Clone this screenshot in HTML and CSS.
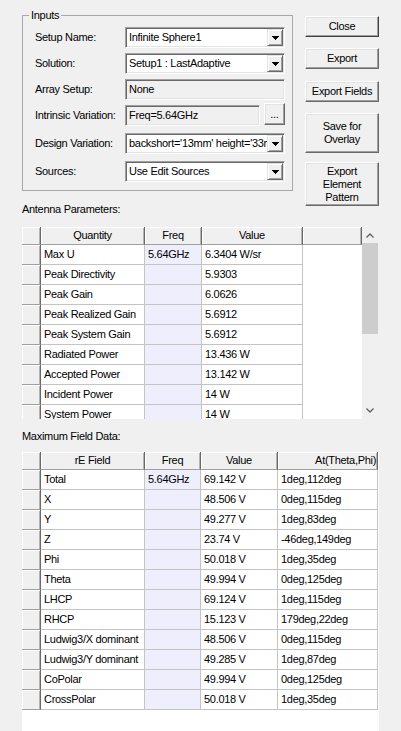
FILE: index.html
```html
<!DOCTYPE html>
<html>
<head>
<meta charset="utf-8">
<link rel="stylesheet" href="styles.css">
</head>
<body>
<div class="dlg">
  <div class="top">
    <fieldset class="group">
      <legend>Inputs</legend>
      <div class="row">
        <span class="lbl">Setup Name:</span>
        <div class="combo sunken"><span class="val">Infinite Sphere1</span><span class="drop"><svg width="7" height="4" viewBox="0 0 7 4"><polygon points="0,0 7,0 3.5,4" fill="#000"/></svg></span></div>
      </div>
      <div class="row">
        <span class="lbl">Solution:</span>
        <div class="combo sunken"><span class="val">Setup1 : LastAdaptive</span><span class="drop"><svg width="7" height="4" viewBox="0 0 7 4"><polygon points="0,0 7,0 3.5,4" fill="#000"/></svg></span></div>
      </div>
      <div class="row">
        <span class="lbl">Array Setup:</span>
        <div class="field ro sunken"><span class="val">None</span></div>
      </div>
      <div class="row">
        <span class="lbl">Intrinsic Variation:</span>
        <div class="field ro short sunken"><span class="val">Freq=5.64GHz</span></div>
        <button class="btn dots">...</button>
      </div>
      <div class="row gap7">
        <span class="lbl">Design Variation:</span>
        <div class="combo sunken"><span class="val">backshort='13mm' height='33mm'</span><span class="drop"><svg width="7" height="4" viewBox="0 0 7 4"><polygon points="0,0 7,0 3.5,4" fill="#000"/></svg></span></div>
      </div>
      <div class="row gap7">
        <span class="lbl">Sources:</span>
        <div class="combo sunken"><span class="val">Use Edit Sources</span><span class="drop"><svg width="7" height="4" viewBox="0 0 7 4"><polygon points="0,0 7,0 3.5,4" fill="#000"/></svg></span></div>
      </div>
    </fieldset>
    <div class="btns">
      <button class="btn b-close">Close</button>
      <button class="btn b-export">Export</button>
      <button class="btn b-fields">Export Fields</button>
      <button class="btn b-save">Save for<br>Overlay</button>
      <button class="btn b-pattern">Export<br>Element<br>Pattern</button>
    </div>
  </div>

  <div class="cap cap1">Antenna Parameters:</div>
  <div class="grid1">
    <div class="gview t1">
      <div class="tr hd"><div class="c"></div><div class="c">Quantity</div><div class="c">Freq</div><div class="c">Value</div><div class="c"></div></div>
      <div class="tr"><div class="c rh"></div><div class="c">Max U</div><div class="c fq">5.64GHz</div><div class="c">6.3404 W/sr</div><div class="c bl"></div></div>
      <div class="tr"><div class="c rh"></div><div class="c">Peak Directivity</div><div class="c fq"></div><div class="c">5.9303</div><div class="c bl"></div></div>
      <div class="tr"><div class="c rh"></div><div class="c">Peak Gain</div><div class="c fq"></div><div class="c">6.0626</div><div class="c bl"></div></div>
      <div class="tr"><div class="c rh"></div><div class="c">Peak Realized Gain</div><div class="c fq"></div><div class="c">5.6912</div><div class="c bl"></div></div>
      <div class="tr"><div class="c rh"></div><div class="c">Peak System Gain</div><div class="c fq"></div><div class="c">5.6912</div><div class="c bl"></div></div>
      <div class="tr"><div class="c rh"></div><div class="c">Radiated Power</div><div class="c fq"></div><div class="c">13.436 W</div><div class="c bl"></div></div>
      <div class="tr"><div class="c rh"></div><div class="c">Accepted Power</div><div class="c fq"></div><div class="c">13.142 W</div><div class="c bl"></div></div>
      <div class="tr"><div class="c rh"></div><div class="c">Incident Power</div><div class="c fq"></div><div class="c">14 W</div><div class="c bl"></div></div>
      <div class="tr"><div class="c rh"></div><div class="c">System Power</div><div class="c fq"></div><div class="c">14 W</div><div class="c bl"></div></div>
    </div>
    <div class="vs">
      <div class="arr up"><svg width="8" height="5" viewBox="0 0 8 5"><polyline points="0.5,4.5 4,1 7.5,4.5" fill="none" stroke="#606060" stroke-width="1.3"/></svg></div>
      <div class="thumb"></div>
      <div class="track"></div>
      <div class="arr dn"><svg width="8" height="5" viewBox="0 0 8 5"><polyline points="0.5,0.5 4,4 7.5,0.5" fill="none" stroke="#606060" stroke-width="1.3"/></svg></div>
    </div>
  </div>

  <div class="cap cap2">Maximum Field Data:</div>
  <div class="grid2 t2">
    <div class="tr hd"><div class="c"></div><div class="c">rE Field</div><div class="c">Freq</div><div class="c">Value</div><div class="c at">At(Theta,Phi)</div></div>
    <div class="tr"><div class="c rh"></div><div class="c">Total</div><div class="c fq">5.64GHz</div><div class="c">69.142 V</div><div class="c">1deg,112deg</div></div>
    <div class="tr"><div class="c rh"></div><div class="c">X</div><div class="c fq"></div><div class="c">48.506 V</div><div class="c">0deg,115deg</div></div>
    <div class="tr"><div class="c rh"></div><div class="c">Y</div><div class="c fq"></div><div class="c">49.277 V</div><div class="c">1deg,83deg</div></div>
    <div class="tr"><div class="c rh"></div><div class="c">Z</div><div class="c fq"></div><div class="c">23.74 V</div><div class="c">-46deg,149deg</div></div>
    <div class="tr"><div class="c rh"></div><div class="c">Phi</div><div class="c fq"></div><div class="c">50.018 V</div><div class="c">1deg,35deg</div></div>
    <div class="tr"><div class="c rh"></div><div class="c">Theta</div><div class="c fq"></div><div class="c">49.994 V</div><div class="c">0deg,125deg</div></div>
    <div class="tr"><div class="c rh"></div><div class="c">LHCP</div><div class="c fq"></div><div class="c">69.124 V</div><div class="c">1deg,115deg</div></div>
    <div class="tr"><div class="c rh"></div><div class="c">RHCP</div><div class="c fq"></div><div class="c">15.123 V</div><div class="c">179deg,22deg</div></div>
    <div class="tr"><div class="c rh"></div><div class="c">Ludwig3/X dominant</div><div class="c fq"></div><div class="c">48.506 V</div><div class="c">0deg,115deg</div></div>
    <div class="tr"><div class="c rh"></div><div class="c">Ludwig3/Y dominant</div><div class="c fq"></div><div class="c">49.285 V</div><div class="c">1deg,87deg</div></div>
    <div class="tr"><div class="c rh"></div><div class="c">CoPolar</div><div class="c fq"></div><div class="c">49.994 V</div><div class="c">0deg,125deg</div></div>
    <div class="tr"><div class="c rh"></div><div class="c">CrossPolar</div><div class="c fq"></div><div class="c">50.018 V</div><div class="c">1deg,35deg</div></div>
  </div>
</div>
</body>
</html>
```
FILE: styles.css
```css
html, body {
  margin: 0;
  padding: 0;
  background: #f0f0f0;
}
body {
  font-family: "Liberation Sans", Arial, sans-serif;
  font-size: 11px;
  line-height: 13px;
  letter-spacing: -0.3px;
  color: #000;
  overflow: hidden;
}
.dlg {
  padding-left: 22px;
  width: 379px;
  box-sizing: border-box;
}
.top {
  display: flex;
  align-items: flex-start;
  padding-top: 9px;
}
.group {
  margin: 0;
  width: 277px;
  box-sizing: border-box;
  border: 1px solid #a8a8a8;
  padding: 5px 7px 8px 6px;
  min-width: 0;
}
.group legend {
  padding: 0 2px;
  line-height: 13px;
}
.row {
  display: flex;
  align-items: center;
  height: 21px;
  margin-top: 5px;
}
.group legend + .row { margin-top: 0; }
.row.gap7 { margin-top: 7px; }
.lbl {
  flex: 0 0 96px;
  box-sizing: border-box;
  padding-left: 6px;
  white-space: nowrap;
}
.sunken {
  border: 1px solid;
  border-color: #a0a0a0 #ffffff #ffffff #a0a0a0;
  box-shadow: inset 1px 1px 0 #696969, inset -1px -1px 0 #e3e3e3;
}
.combo, .field {
  width: 166px;
  height: 21px;
  box-sizing: border-box;
  display: flex;
  align-items: center;
  padding: 1px;
  background: #fff;
  overflow: hidden;
}
.field.ro { background: #f0f0f0; }
.field.short { width: 140px; }
.val {
  flex: 1 1 auto;
  min-width: 0;
  padding-left: 2px;
  white-space: nowrap;
  overflow: hidden;
}
.drop {
  flex: 0 0 16px;
  height: 17px;
  box-sizing: border-box;
  background: #f0f0f0;
  border: 1px solid;
  border-color: #e3e3e3 #696969 #696969 #e3e3e3;
  box-shadow: inset 1px 1px 0 #fff, inset -1px -1px 0 #a0a0a0;
  display: flex;
  align-items: center;
  justify-content: center;
}
.drop svg { display: block; shape-rendering: crispEdges; }
.btn {
  font-family: inherit;
  font-size: 11px;
  line-height: 13px;
  letter-spacing: -0.3px;
  color: #000;
  margin: 0;
  padding: 0;
  background: #f0f0f0;
  box-sizing: border-box;
  border: 1px solid;
  border-color: #ffffff #696969 #696969 #ffffff;
  box-shadow: inset -1px -1px 0 #a0a0a0, inset 1px 1px 0 #e3e3e3;
  text-align: center;
}
.dots {
  width: 22px;
  height: 22px;
  margin-left: 4px;
  align-self: flex-start;
  margin-top: -2px;
}
.btns {
  display: flex;
  flex-direction: column;
  width: 74px;
  margin-left: 12px;
  margin-top: 7px;
}
.btns .btn { width: 74px; height: 21px; }
.b-close { border-color: #ffffff #404040 #404040 #ffffff; }
.b-export { margin-top: 11px; }
.b-fields { margin-top: 12px; }
.btns .b-save { margin-top: 11px; height: 40px; }
.btns .b-pattern { margin-top: 9px; height: 44px; }
.cap { line-height: 13px; white-space: nowrap; }
.cap1 { margin-top: -3px; }
.cap2 { margin-top: 11px; }
.grid1 {
  margin-top: 11px;
  display: flex;
  height: 192px;
  width: 356px;
  overflow: hidden;
}
.gview {
  width: 340px;
  height: 192px;
  overflow: hidden;
  background: #fff;
}
.grid2 {
  margin-top: 9px;
  width: 357px;
  height: 279px;
  overflow: hidden;
  background: #fff;
}
.tr { display: grid; }
.t1 .tr { grid-template-columns: 19px 104px 57px 101px 59px; }
.t2 .tr { grid-template-columns: 19px 104px 56px 77px 100px; }
.c {
  box-sizing: border-box;
  height: 20px;
  line-height: 19px;
  padding: 0 0 0 3px;
  border-right: 1px solid #c4c4c4;
  border-bottom: 1px solid #c4c4c4;
  white-space: nowrap;
  overflow: hidden;
  background: #fff;
}
.hd .c {
  height: 18px;
  line-height: 17px;
  padding: 0;
  text-align: center;
  background: #f0f0f0;
  border-right-color: #696969;
  border-bottom-color: #a0a0a0;
  box-shadow: inset 1px 1px 0 #fff, inset -1px 0 0 #b4b4b4;
}
.hd .c.at { text-align: right; padding-right: 1px; }
.c.rh {
  padding: 0;
  background: #f0f0f0;
  border-right-color: #696969;
  border-bottom-color: #a0a0a0;
  box-shadow: inset 1px 1px 0 #fff, inset -1px 0 0 #b4b4b4;
}
.c.fq { background: #eeeefd; }
.c.bl { border: none; }
.vs {
  width: 16px;
  height: 192px;
  background: #f0f0f0;
  display: flex;
  flex-direction: column;
}
.arr {
  display: flex;
  align-items: center;
  justify-content: center;
}
.arr svg { display: block; }
.arr.up { height: 16px; }
.arr.dn { height: 17px; }
.thumb { height: 91px; background: #cdcdcd; }
.track { flex: 1 1 auto; }
```
